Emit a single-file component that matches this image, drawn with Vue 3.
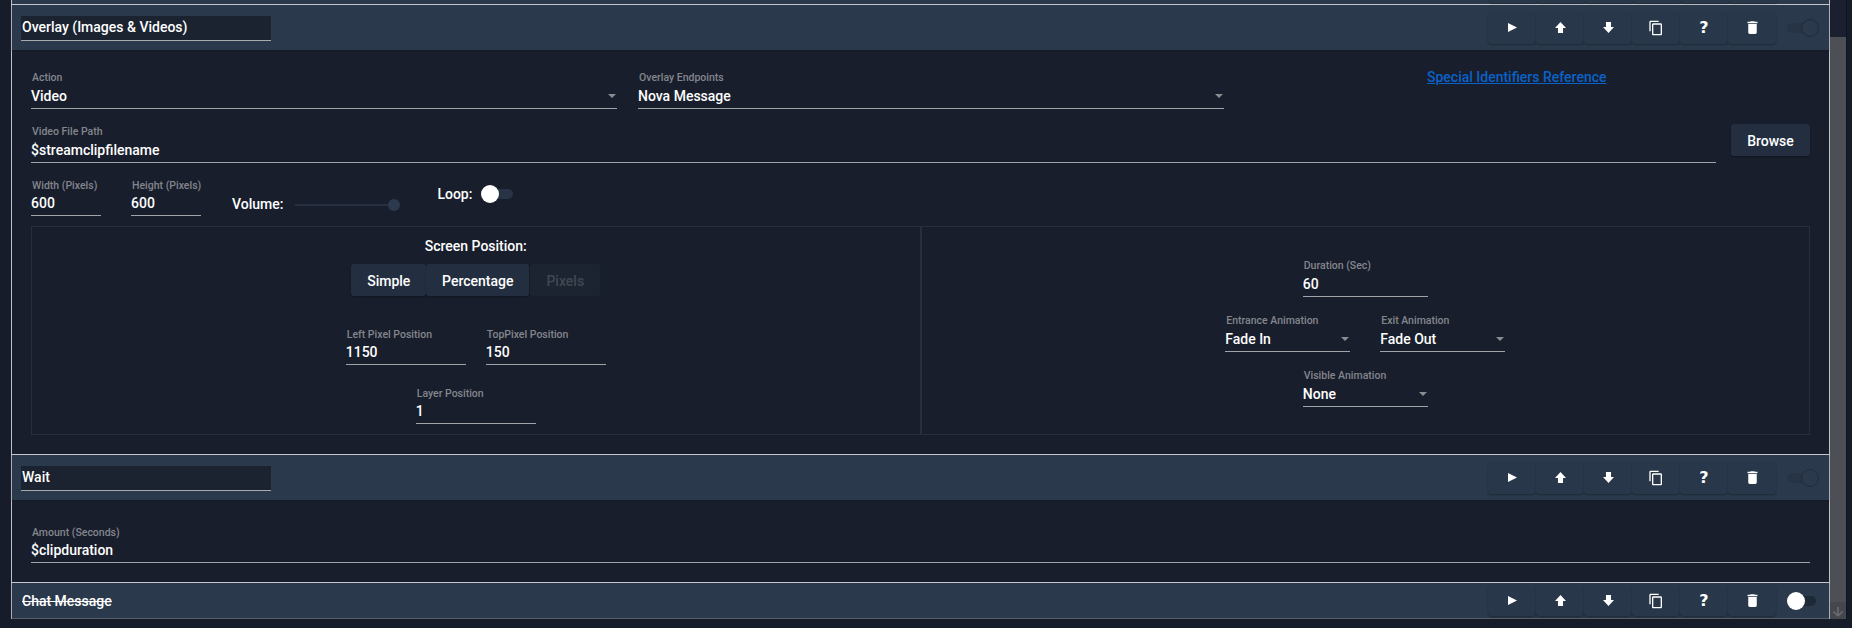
<script setup>
const tools = ['play', 'up', 'down', 'copy', 'help', 'trash']
</script>

<template>
  <div class="page">
    <div class="list">
      <div class="strip">
        <span v-for="t in tools" :key="t" class="stub"></span>
      </div>

      <section class="card">
        <header class="head">
          <div class="name">Overlay (Images &amp; Videos)</div>
          <div class="tools">
            <button v-for="t in tools" :key="t" class="tool">
              <svg v-if="t === 'play'" class="i-play" viewBox="0 0 8 8"><path d="M0 0L8 4L0 8z" /></svg>
              <svg v-else-if="t === 'up'" class="i-arrow" viewBox="0 0 10 10"><path d="M5 0L10 5.4H7.3V10H2.7V5.4H0z" /></svg>
              <svg v-else-if="t === 'down'" class="i-arrow" viewBox="0 0 10 10"><path d="M5 10L10 4.6H7.3V0H2.7V4.6H0z" /></svg>
              <svg v-else-if="t === 'copy'" class="i-copy" viewBox="0 0 24 24"><path d="M16 1H4c-1.1 0-2 .9-2 2v14h2V3h12V1zm3 4H8c-1.1 0-2 .9-2 2v14c0 1.1.9 2 2 2h11c1.1 0 2-.9 2-2V7c0-1.1-.9-2-2-2zm0 16H8V7h11v14z" /></svg>
              <span v-else-if="t === 'help'" class="q">?</span>
              <svg v-else class="i-trash" viewBox="0 0 24 24"><path d="M6 19c0 1.1.9 2 2 2h8c1.1 0 2-.9 2-2V7H6v12zM19 4h-3.5l-1-1h-5l-1 1H5v2h14V4z" /></svg>
            </button>
          </div>
          <div class="switch"><span class="track"></span><span class="thumb off"></span></div>
        </header>

        <div class="body overlay-body">
          <div class="row first">
            <div class="field select action">
              <label>Action</label>
              <div class="value">Video</div>
            </div>
            <div class="field select action">
              <label>Overlay Endpoints</label>
              <div class="value">Nova Message</div>
            </div>
            <a class="link">Special Identifiers Reference</a>
          </div>

          <div class="row second">
            <div class="field path">
              <label>Video File Path</label>
              <div class="value">$streamclipfilename</div>
            </div>
            <button class="btn browse">Browse</button>
          </div>

          <div class="row third">
            <div class="field tight px">
              <label>Width (Pixels)</label>
              <div class="value">600</div>
            </div>
            <div class="field tight px">
              <label>Height (Pixels)</label>
              <div class="value">600</div>
            </div>
            <div class="inline-label volume">Volume:</div>
            <div class="slider"><span class="knob"></span></div>
            <div class="inline-label loop">Loop:</div>
            <div class="switch loop-switch"><span class="track"></span><span class="thumb on"></span></div>
          </div>

          <div class="box">
            <div class="col left">
              <div class="title">Screen Position:</div>
              <div class="segment">
                <button class="btn seg-simple">Simple</button>
                <button class="btn seg-percent">Percentage</button>
                <button class="btn seg-pixels">Pixels</button>
              </div>
              <div class="pair pos">
                <div class="field tight wide">
                  <label>Left Pixel Position</label>
                  <div class="value">1150</div>
                </div>
                <div class="field tight wide">
                  <label>TopPixel Position</label>
                  <div class="value">150</div>
                </div>
              </div>
              <div class="field tight wide layer">
                <label>Layer Position</label>
                <div class="value">1</div>
              </div>
            </div>
            <div class="col right">
              <div class="field anim">
                <label>Duration (Sec)</label>
                <div class="value">60</div>
              </div>
              <div class="pair gap30">
                <div class="field select anim">
                  <label>Entrance Animation</label>
                  <div class="value">Fade In</div>
                </div>
                <div class="field select anim">
                  <label>Exit Animation</label>
                  <div class="value">Fade Out</div>
                </div>
              </div>
              <div class="field select anim">
                <label>Visible Animation</label>
                <div class="value">None</div>
              </div>
            </div>
          </div>
        </div>
      </section>

      <section class="card">
        <header class="head">
          <div class="name">Wait</div>
          <div class="tools">
            <button v-for="t in tools" :key="t" class="tool">
              <svg v-if="t === 'play'" class="i-play" viewBox="0 0 8 8"><path d="M0 0L8 4L0 8z" /></svg>
              <svg v-else-if="t === 'up'" class="i-arrow" viewBox="0 0 10 10"><path d="M5 0L10 5.4H7.3V10H2.7V5.4H0z" /></svg>
              <svg v-else-if="t === 'down'" class="i-arrow" viewBox="0 0 10 10"><path d="M5 10L10 4.6H7.3V0H2.7V4.6H0z" /></svg>
              <svg v-else-if="t === 'copy'" class="i-copy" viewBox="0 0 24 24"><path d="M16 1H4c-1.1 0-2 .9-2 2v14h2V3h12V1zm3 4H8c-1.1 0-2 .9-2 2v14c0 1.1.9 2 2 2h11c1.1 0 2-.9 2-2V7c0-1.1-.9-2-2-2zm0 16H8V7h11v14z" /></svg>
              <span v-else-if="t === 'help'" class="q">?</span>
              <svg v-else class="i-trash" viewBox="0 0 24 24"><path d="M6 19c0 1.1.9 2 2 2h8c1.1 0 2-.9 2-2V7H6v12zM19 4h-3.5l-1-1h-5l-1 1H5v2h14V4z" /></svg>
            </button>
          </div>
          <div class="switch"><span class="track"></span><span class="thumb off"></span></div>
        </header>
        <div class="body wait-body">
          <div class="field tight">
            <label>Amount (Seconds)</label>
            <div class="value">$clipduration</div>
          </div>
        </div>
      </section>

      <section class="card last">
        <header class="head short">
          <div class="name plain">Chat Message</div>
          <div class="tools">
            <button v-for="t in tools" :key="t" class="tool">
              <svg v-if="t === 'play'" class="i-play" viewBox="0 0 8 8"><path d="M0 0L8 4L0 8z" /></svg>
              <svg v-else-if="t === 'up'" class="i-arrow" viewBox="0 0 10 10"><path d="M5 0L10 5.4H7.3V10H2.7V5.4H0z" /></svg>
              <svg v-else-if="t === 'down'" class="i-arrow" viewBox="0 0 10 10"><path d="M5 10L10 4.6H7.3V0H2.7V4.6H0z" /></svg>
              <svg v-else-if="t === 'copy'" class="i-copy" viewBox="0 0 24 24"><path d="M16 1H4c-1.1 0-2 .9-2 2v14h2V3h12V1zm3 4H8c-1.1 0-2 .9-2 2v14c0 1.1.9 2 2 2h11c1.1 0 2-.9 2-2V7c0-1.1-.9-2-2-2zm0 16H8V7h11v14z" /></svg>
              <span v-else-if="t === 'help'" class="q">?</span>
              <svg v-else class="i-trash" viewBox="0 0 24 24"><path d="M6 19c0 1.1.9 2 2 2h8c1.1 0 2-.9 2-2V7H6v12zM19 4h-3.5l-1-1h-5l-1 1H5v2h14V4z" /></svg>
            </button>
          </div>
          <div class="switch"><span class="track dark"></span><span class="thumb on"></span></div>
        </header>
      </section>
    </div>

    <aside class="scrollbar">
      <div class="sb-top"></div>
      <div class="sb-thumb"></div>
      <div class="sb-arrow">
        <svg viewBox="0 0 12 12" width="12" height="12"><path d="M6 11L1.5 6.5M6 11L10.5 6.5M6 11V2" fill="none" stroke="#6a6c73" stroke-width="1.6" /></svg>
      </div>
    </aside>
  </div>
</template>

<style>
html, body {
  margin: 0;
  background: #181e2c;
  overflow: hidden;
}
</style>

<style scoped>
* {
  box-sizing: border-box;
}
.page {
  width: 1852px;
  height: 628px;
  overflow: hidden;
  display: flex;
  align-items: flex-start;
  padding-left: 11px;
  background: #161c29;
  font-family: Roboto, "Liberation Sans", sans-serif;
  font-size: 14px;
  color: #fff;
}
.list {
  width: 1819px;
  height: 619px;
  border-left: 1px solid #bfc1c5;
  border-right: 1px solid #bfc1c5;
  border-bottom: 1px solid #bfc1c5;
  flex: none;
}
.strip {
  height: 4px;
  background: #2a394b;
  display: flex;
  justify-content: flex-end;
  padding-right: 52px;
}
.stub {
  width: 48px;
  height: 3px;
  background: #28374a;
  border-radius: 0 0 3px 3px;
  box-shadow: 0 1px 2px rgba(0, 0, 0, 0.25);
}
.card {
  border-top: 1px solid #c5c7ca;
}
.head {
  height: 45px;
  background: #2a394b;
  display: flex;
  align-items: center;
  padding-left: 9px;
  box-shadow: 0 1px 1px rgba(20, 26, 38, 0.6);
  position: relative;
}
.head.short {
  height: 35px;
}
.name {
  width: 250px;
  height: 25px;
  background: #1b2230;
  border-bottom: 1px solid #a9aaae;
  font-weight: 500;
  font-size: 14px;
  line-height: 23px;
  padding-left: 1px;
  margin-top: 1px;
  white-space: nowrap;
}
.name.plain {
  background: none;
  border: none;
  text-decoration: line-through;
  margin-top: 0;
  line-height: 27px;
}
.tools {
  margin-left: auto;
  display: flex;
}
.tool {
  width: 48px;
  height: 32px;
  border: none;
  padding: 0;
  background: #28374a;
  border-radius: 4px;
  box-shadow: 0 1px 2px rgba(0, 0, 0, 0.28);
  display: flex;
  align-items: center;
  justify-content: center;
  color: #fff;
}
.short .tool {
  height: 31px;
}
.tool svg {
  fill: #fff;
  display: block;
}
.i-play {
  width: 9px;
  height: 9px;
}
.i-arrow {
  width: 11px;
  height: 11px;
}
.i-copy {
  width: 16px;
  height: 16px;
}
.i-trash {
  width: 17px;
  height: 17px;
}
.q {
  font-family: "DejaVu Sans", Roboto, sans-serif;
  font-weight: 700;
  font-size: 16px;
  line-height: 18px;
}
.switch {
  position: relative;
  width: 29px;
  height: 20px;
  margin-left: 11px;
  margin-right: 13px;
  flex: none;
}
.track {
  position: absolute;
  left: 0;
  right: 0;
  top: 5px;
  height: 10px;
  border-radius: 5px;
  background: #273446;
}
.track.dark {
  background: #1d2937;
}
.thumb {
  position: absolute;
  top: 1px;
  width: 18px;
  height: 18px;
  border-radius: 50%;
}
.thumb.off {
  left: 14px;
  background: #2a394b;
  border: 1px solid #212c3b;
}
.thumb.on {
  left: 0;
  background: #fff;
}
.body {
  background: #181e2c;
}
.overlay-body {
  height: 404px;
  padding: 21px 19px 0;
}
.wait-body {
  height: 82px;
  padding: 26px 19px 0;
}
.row {
  display: flex;
  align-items: flex-start;
}
.second {
  margin-top: 16px;
}
.third {
  margin-top: 16px;
}
.field {
  width: 100%;
  position: relative;
  flex: none;
}
.field label {
  display: block;
  height: 13px;
  font-size: 10.5px;
  line-height: 14px;
  color: #84868c;
  font-weight: 500;
  padding-left: 1px;
  white-space: nowrap;
}
.field.tight label {
  height: 12px;
}
.value {
  height: 25px;
  line-height: 25px;
  font-weight: 500;
  font-size: 14px;
  border-bottom: 1px solid #a2a3a8;
  color: #fff;
}
.select::after {
  content: "";
  position: absolute;
  right: 1px;
  bottom: 11px;
  border-left: 4px solid transparent;
  border-right: 4px solid transparent;
  border-top: 4px solid #8b8c92;
}
.action {
  width: 586px;
  margin-right: 21px;
}
.link {
  margin-left: 182px;
  margin-top: -4px;
  line-height: 20px;
  color: #0a62c9;
  font-weight: 500;
  text-decoration: underline;
}
.path {
  width: 1685px;
}
.btn {
  border: none;
  padding: 1px 0 0;
  height: 32px;
  border-radius: 3px;
  background: #232f41;
  color: #fff;
  font-family: inherit;
  font-size: 14px;
  font-weight: 500;
  box-shadow: 0 1px 2px rgba(0, 0, 0, 0.3);
}
.browse {
  width: 79px;
  margin-left: 15px;
  margin-top: -1px;
}
.px {
  width: 70px;
  margin-right: 30px;
}
.inline-label {
  font-weight: 500;
  font-size: 14px;
  line-height: 20px;
}
.volume {
  margin-top: 15px;
  margin-left: 1px;
}
.slider {
  width: 105px;
  height: 2px;
  background: #262f3f;
  margin: 25px 0 0 12px;
  position: relative;
  flex: none;
}
.knob {
  position: absolute;
  right: 0;
  top: -5px;
  width: 12px;
  height: 12px;
  border-radius: 50%;
  background: #2d3a4e;
}
.loop {
  margin-left: 37px;
  margin-top: 5px;
}
.loop-switch {
  margin: 5px 0 0 9px;
  width: 32px;
}
.box {
  display: flex;
  margin-top: 10px;
  width: 1779px;
  height: 209px;
  border: 1px solid #252f40;
}
.col {
  flex: 1;
  display: flex;
  flex-direction: column;
  align-items: center;
}
.left {
  padding-top: 9px;
  border-right: 2px solid #252f40;
}
.right {
  padding-top: 32px;
}
.title {
  font-weight: 500;
  font-size: 14px;
  line-height: 20px;
}
.segment {
  display: flex;
  margin-top: 8px;
}
.seg-simple {
  width: 75px;
}
.seg-percent {
  width: 103px;
}
.seg-pixels {
  width: 70px;
  margin-left: 1px;
  background: #1c2431;
  color: #414752;
  box-shadow: none;
}
.pair {
  display: flex;
}
.pos {
  gap: 20px;
  margin-top: 32px;
}
.wide {
  width: 120px;
}
.layer {
  margin-top: 22px;
}
.anim {
  width: 125px;
}
.gap30 {
  gap: 30px;
  margin: 17px 0;
}
.scrollbar {
  width: 17px;
  height: 619px;
  flex: none;
  display: flex;
  flex-direction: column;
  border-right: 1px solid #10151f;
}
.sb-top {
  height: 37px;
  background: #1a2030;
}
.sb-thumb {
  flex: 1;
  background: #4d4f57;
}
.sb-arrow {
  height: 17px;
  background: #45474f;
  display: flex;
  align-items: center;
  justify-content: center;
}
</style>
